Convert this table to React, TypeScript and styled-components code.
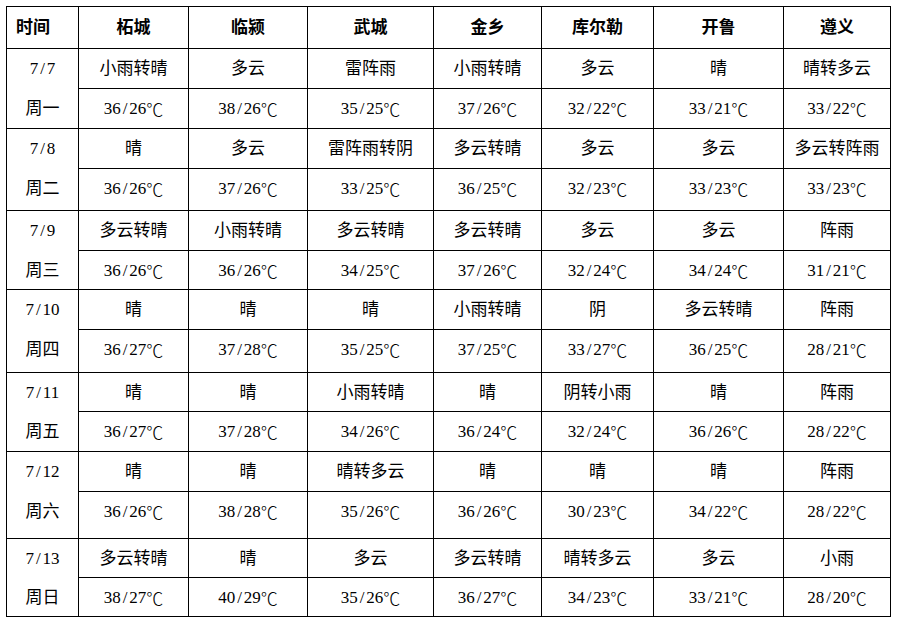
import React from "react";
import styled, { createGlobalStyle } from "styled-components";

const GlobalStyle = createGlobalStyle`
  html, body { margin: 0; padding: 0; background: #ffffff; }
  body { font-family: "Liberation Serif", "Noto Sans CJK SC", serif; color: #000; }
`;

const Page = styled.div`
  padding: 6px 0 0 6px;
`;

const Grid = styled.div`
  display: grid;
  width: max-content;
  grid-template-columns: 72px 110px 119px 126px 108px 112px 130px 107px;
  grid-template-rows: 42px 40px 40px 40px 42px 40px 39px 40px 43px 39px 40px 40px 47px 39px 39px;
  border-top: 1px solid #000;
  border-left: 1px solid #000;
`;

const Cell = styled.div<{ $head?: boolean; $left?: boolean; $open?: boolean }>`
  box-sizing: border-box;
  border-right: 1px solid #000;
  border-bottom: ${(p) => (p.$open ? "none" : "1px solid #000")};
  display: flex;
  align-items: ${(p) => (p.$head ? "center" : "flex-start")};
  justify-content: ${(p) => (p.$left ? "flex-start" : "center")};
  padding-left: ${(p) => (p.$left ? "9px" : "0")};
  padding-top: ${(p) => (p.$head ? "0" : "11px")};
  font-size: 17px;
  font-weight: ${(p) => (p.$head ? 700 : 400)};
  white-space: nowrap;
  line-height: 17px;
`;

const Slash = styled.span`
  display: inline-block;
  width: 0.5em;
  text-align: center;
`;

const Deg = styled.span`
  font-family: "Noto Sans CJK SC", sans-serif;
  font-weight: 300;
`;

const cities = ["柘城", "临颍", "武城", "金乡", "库尔勒", "开鲁", "遵义"];

type Day = { date: string; week: string; weather: string[]; temp: string[] };

const days: Day[] = [
  {
    date: "7/7",
    week: "周一",
    weather: ["小雨转晴", "多云", "雷阵雨", "小雨转晴", "多云", "晴", "晴转多云"],
    temp: ["36/26", "38/26", "35/25", "37/26", "32/22", "33/21", "33/22"],
  },
  {
    date: "7/8",
    week: "周二",
    weather: ["晴", "多云", "雷阵雨转阴", "多云转晴", "多云", "多云", "多云转阵雨"],
    temp: ["36/26", "37/26", "33/25", "36/25", "32/23", "33/23", "33/23"],
  },
  {
    date: "7/9",
    week: "周三",
    weather: ["多云转晴", "小雨转晴", "多云转晴", "多云转晴", "多云", "多云", "阵雨"],
    temp: ["36/26", "36/26", "34/25", "37/26", "32/24", "34/24", "31/21"],
  },
  {
    date: "7/10",
    week: "周四",
    weather: ["晴", "晴", "晴", "小雨转晴", "阴", "多云转晴", "阵雨"],
    temp: ["36/27", "37/28", "35/25", "37/25", "33/27", "36/25", "28/21"],
  },
  {
    date: "7/11",
    week: "周五",
    weather: ["晴", "晴", "小雨转晴", "晴", "阴转小雨", "晴", "阵雨"],
    temp: ["36/27", "37/28", "34/26", "36/24", "32/24", "36/26", "28/22"],
  },
  {
    date: "7/12",
    week: "周六",
    weather: ["晴", "晴", "晴转多云", "晴", "晴", "晴", "阵雨"],
    temp: ["36/26", "38/28", "35/26", "36/26", "30/23", "34/22", "28/22"],
  },
  {
    date: "7/13",
    week: "周日",
    weather: ["多云转晴", "晴", "多云", "多云转晴", "晴转多云", "多云", "小雨"],
    temp: ["38/27", "40/29", "35/26", "36/27", "34/23", "33/21", "28/20"],
  },
];

function WithSlash({ text }: { text: string }) {
  const [a, b] = text.split("/");
  return (
    <>
      {a}
      <Slash>/</Slash>
      {b}
    </>
  );
}

export default function App() {
  return (
    <>
      <GlobalStyle />
      <Page>
        <Grid>
          <Cell $head $left>时间</Cell>
          {cities.map((c) => (
            <Cell key={c} $head>
              {c}
            </Cell>
          ))}
          {days.map((d) => (
            <React.Fragment key={d.date}>
              <Cell $open>
                <WithSlash text={d.date} />
              </Cell>
              {d.weather.map((w, i) => (
                <Cell key={"w" + i}>{w}</Cell>
              ))}
              <Cell>{d.week}</Cell>
              {d.temp.map((t, i) => (
                <Cell key={"t" + i}>
                  <WithSlash text={t} />
                  <Deg>℃</Deg>
                </Cell>
              ))}
            </React.Fragment>
          ))}
        </Grid>
      </Page>
    </>
  );
}
